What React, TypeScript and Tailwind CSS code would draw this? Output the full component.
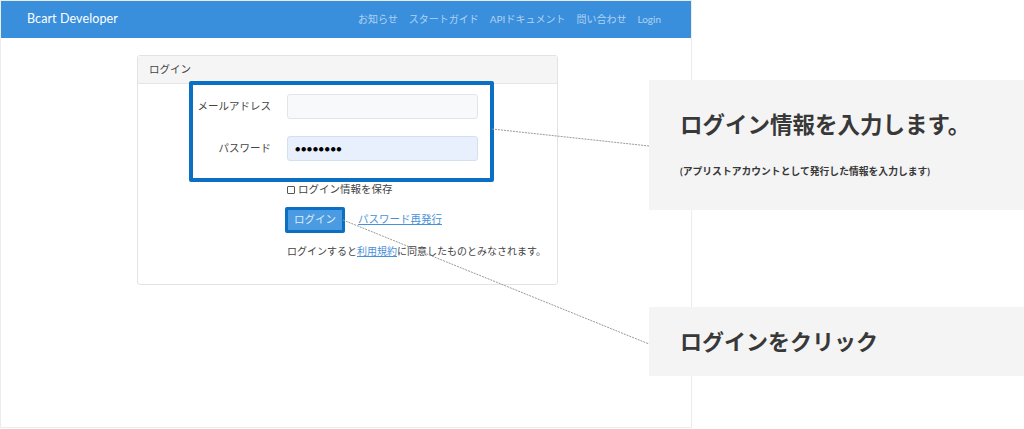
const jp = "font-['Lato','Noto_Sans_CJK_JP',sans-serif]";

function Navbar() {
  return (
    <div className="h-[37px] bg-[#3a8fdc] flex items-center justify-between pl-[26px] pr-[30px]">
      <span className="text-white text-[12.5px] tracking-[0.1px]">Bcart Developer</span>
      <nav className="flex items-center gap-[11px] text-[10px] text-[#b0d2f2]">
        <span>お知らせ</span>
        <span>スタートガイド</span>
        <span>APIドキュメント</span>
        <span>問い合わせ</span>
        <span>Login</span>
      </nav>
    </div>
  );
}

function LoginPanel() {
  return (
    <div className="ml-[136px] mt-[17px] w-[421px] h-[230px] border border-[#e3e3e3] rounded-[3px] bg-white">
      <div className="h-[28px] bg-[#f5f5f5] border-b border-[#e6e6e6] flex items-center pl-[11px] text-[10.5px] text-[#444]">
        ログイン
      </div>
      <div className="relative">
        <div className="absolute left-[51px] top-[-3px] w-[305px] h-[101px] border-[4px] border-[#0b6fc4] rounded-[2px]" />
        <div className="pt-[10px] flex flex-col gap-[17px]">
          <div className="flex items-center">
            <span className="w-[133px] text-right text-[10.5px] text-[#444]">メールアドレス</span>
            <div className="ml-[16px] w-[191px] h-[25px] bg-[#f8f9fb] border border-[#e2e4e8] rounded-[3px]" />
          </div>
          <div className="flex items-center">
            <span className="w-[133px] text-right text-[10.5px] text-[#444]">パスワード</span>
            <div className="ml-[16px] w-[191px] h-[25px] bg-[#e8f0fe] border border-[#d6dff0] rounded-[3px] flex items-center pl-[7px] text-[9px] tracking-[0.5px] text-black">
              ●●●●●●●●
            </div>
          </div>
        </div>
        <div className="ml-[149px] mt-[21px] flex items-center text-[10.5px] text-[#444]">
          <span className="w-[8px] h-[8px] border border-[#555] rounded-[1px] mr-[3px]" />
          ログイン情報を保存
        </div>
        <div className="ml-[147px] mt-[9px] flex items-center">
          <div className="w-[60px] h-[26px] border-[3px] border-[#0b6fc4] rounded-[2px] bg-[#4b9be3] flex items-center justify-center text-[10.5px] text-[#dcecfb]">
            ログイン
          </div>
          <span className="ml-[13px] text-[10.5px] text-[#4a90d9] underline">パスワード再発行</span>
        </div>
        <div className="ml-[149px] mt-[11px] text-[10px] text-[#444] whitespace-nowrap">
          ログインすると<span className="text-[#4a90d9] underline">利用規約</span>に同意したものとみなされます。
        </div>
      </div>
    </div>
  );
}

export default function App() {
  return (
    <div className={`relative w-[1024px] h-[429px] bg-white overflow-hidden ${jp}`}>
      <div className="w-[692px] h-[428px] border border-[#ececec] bg-white">
        <Navbar />
        <LoginPanel />
      </div>
      <div className="absolute left-[649px] top-[80px] w-[375px] h-[130px] bg-[#f4f4f4] pl-[31px] pt-[34px]">
        <div className="text-[22.5px] font-bold text-[#383838] leading-none">ログイン情報を入力します。</div>
        <div className="mt-[27px] text-[9.8px] font-bold text-[#383838]">(アプリストアカウントとして発行した情報を入力します)</div>
      </div>
      <div className="absolute left-[649px] top-[307px] w-[375px] h-[69px] bg-[#f4f4f4] pl-[31px] flex items-center">
        <div className="text-[22px] font-bold text-[#383838] leading-none">ログインをクリック</div>
      </div>
      <svg className="absolute left-0 top-0 pointer-events-none" width="1024" height="429">
        <line x1="492" y1="129" x2="649" y2="146" stroke="#999" strokeWidth="1" strokeDasharray="2 1" />
        <line x1="343" y1="220" x2="649" y2="344" stroke="#999" strokeWidth="1" strokeDasharray="2 1" />
      </svg>
    </div>
  );
}
